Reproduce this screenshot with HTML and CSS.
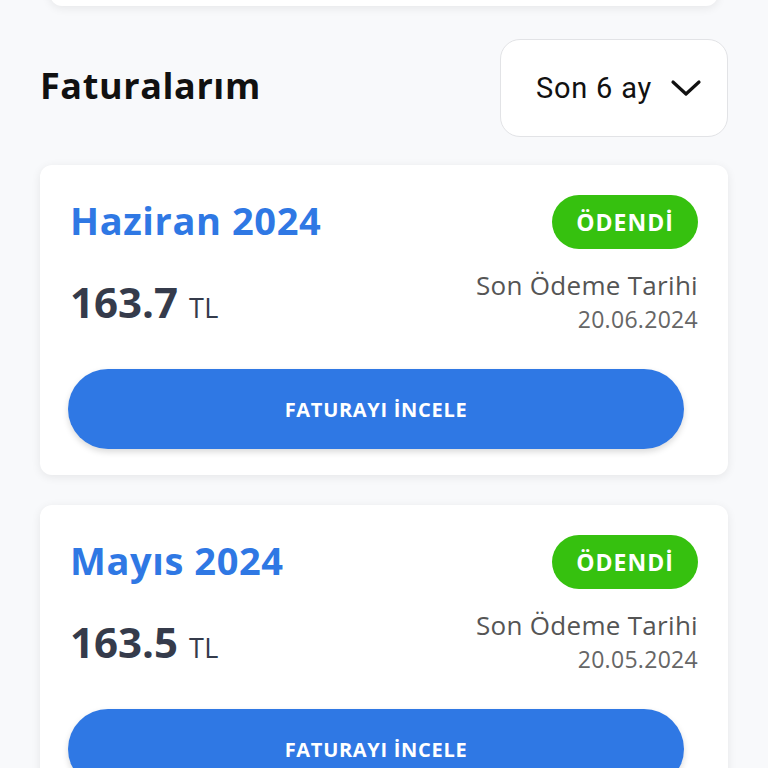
FILE: index.html
```html
<!DOCTYPE html>
<html lang="tr">
<head>
  <meta charset="UTF-8"/>
  <title>Faturalarım</title>
  <link rel="stylesheet" href="styles.css">
</head>
<body>
<div class="page">
  <div class="prev-card"></div>

  <div class="header">
    <h2 class="title">Faturalarım</h2>
    <button class="period-select">
      <span>Son 6 ay</span>
      <svg class="chevron" width="32" height="18" viewBox="0 0 32 18">
        <path d="M3 3 L16 15 L29 3" fill="none" stroke="#111" stroke-width="3.2" stroke-linecap="round" stroke-linejoin="round"/>
      </svg>
    </button>
  </div>

  <div class="bill-card">
    <div class="bill-top">
      <span class="bill-month">Haziran 2024</span>
      <span class="badge">ÖDENDİ</span>
    </div>
    <div class="bill-middle">
      <div class="amount">163.7 <span class="currency">TL</span></div>
      <div class="due">
        <div class="due-label">Son Ödeme Tarihi</div>
        <div class="due-date">20.06.2024</div>
      </div>
    </div>
    <button class="review-button">FATURAYI İNCELE</button>
  </div>

  <div class="bill-card">
    <div class="bill-top">
      <span class="bill-month">Mayıs 2024</span>
      <span class="badge">ÖDENDİ</span>
    </div>
    <div class="bill-middle">
      <div class="amount">163.5 <span class="currency">TL</span></div>
      <div class="due">
        <div class="due-label">Son Ödeme Tarihi</div>
        <div class="due-date">20.05.2024</div>
      </div>
    </div>
    <button class="review-button">FATURAYI İNCELE</button>
  </div>
</div>
</body>
</html>
```

FILE: styles.css
```css
body {
    margin: 0;
    background: #f8f9fb;
    font-family: "Open Sans", sans-serif;
    overflow: hidden;
}
.page {
    padding: 0 40px;
}
.prev-card {
    height: 100px;
    margin: -94px 10px 0 10px;
    background: #fff;
    border-radius: 12px;
    box-shadow: 0 2px 10px rgba(0, 0, 0, 0.08);
}
.header {
    display: flex;
    justify-content: space-between;
    align-items: center;
    margin-top: 33px;
    margin-bottom: 28px;
}
.title {
    margin: 0 0 6px 0;
    font-size: 36px;
    font-weight: 700;
    letter-spacing: 0.6px;
    color: #111;
}
.period-select {
    width: 228px;
    height: 98px;
    display: flex;
    align-items: center;
    justify-content: center;
    gap: 18px;
    background: #fff;
    border: 1.5px solid #e2e3e6;
    border-radius: 20px;
    font-family: Roboto, sans-serif;
    font-size: 29px;
    letter-spacing: 0.8px;
    color: #111;
    padding: 0 0 0 10px;
}
.chevron {
    display: block;
}
.bill-card {
    background: #fff;
    border-radius: 12px;
    box-shadow: 0 2px 10px rgba(0, 0, 0, 0.08);
    padding: 30px 30px 26px 30px;
    margin-bottom: 30px;
}
.bill-top {
    display: flex;
    justify-content: space-between;
    align-items: center;
}
.bill-month {
    font-size: 38px;
    font-weight: 700;
    letter-spacing: 0.6px;
    color: #2f78e4;
    margin-top: -4px;
}
.badge {
    height: 54px;
    width: 146px;
    border-radius: 27px;
    background: #36c10f;
    color: #fff;
    font-size: 23px;
    font-weight: 700;
    letter-spacing: 1px;
    display: flex;
    align-items: center;
    justify-content: center;
}
.bill-middle {
    display: flex;
    justify-content: space-between;
    align-items: center;
    margin-top: 18px;
}
.amount {
    font-size: 42px;
    font-weight: 700;
    color: #353b4b;
}
.currency {
    font-size: 27px;
    font-weight: 400;
    letter-spacing: 0.5px;
}
.due {
    text-align: right;
}
.due-label {
    font-size: 26px;
    letter-spacing: 0.3px;
    color: #555;
}
.due-date {
    font-size: 23px;
    letter-spacing: 0.3px;
    color: #666;
    margin-top: 0;
}
.review-button {
    display: block;
    width: 616px;
    height: 80px;
    margin: 34px 0 0 -2px;
    border: none;
    border-radius: 40px;
    background: #2f78e4;
    color: #fff;
    font-family: "Open Sans", sans-serif;
    font-size: 20px;
    font-weight: 700;
    letter-spacing: 0.7px;
    box-shadow: 0 3px 6px rgba(0, 0, 0, 0.15);
}
```
